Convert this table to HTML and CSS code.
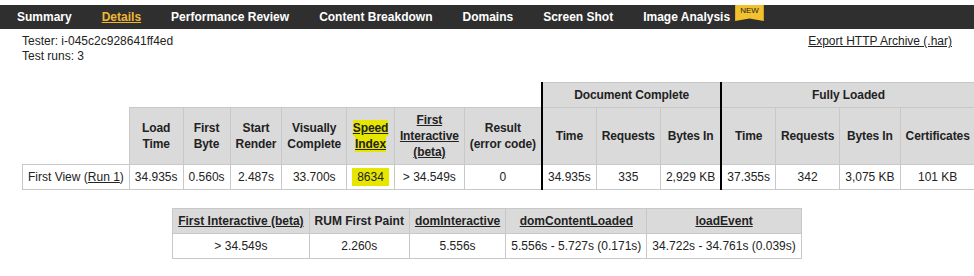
FILE: index.html
```html
<!DOCTYPE html>
<html lang="en">
<head>
<meta charset="utf-8">
<title>Test Details</title>
<link rel="stylesheet" href="styles.css">
</head>
<body>
<nav class="tabs">
  <a class="tab" href="#">Summary</a>
  <a class="tab active" href="#">Details</a>
  <a class="tab" href="#">Performance Review</a>
  <a class="tab" href="#">Content Breakdown</a>
  <a class="tab" href="#">Domains</a>
  <a class="tab" href="#">Screen Shot</a>
  <a class="tab" href="#">Image Analysis<span class="badge">NEW</span></a>
</nav>
<div class="page">
  <div class="info">
    <div class="meta">
      <div>Tester: i-045c2c928641ff4ed</div>
      <div>Test runs: 3</div>
    </div>
    <a class="export" href="#">Export HTTP Archive (.har)</a>
  </div>

  <table class="results">
    <thead>
      <tr>
        <th class="empty" colspan="8"></th>
        <th class="divider" colspan="3">Document Complete</th>
        <th class="divider" colspan="4">Fully Loaded</th>
      </tr>
      <tr>
        <th class="empty"></th>
        <th>Load<br>Time</th>
        <th>First<br>Byte</th>
        <th>Start<br>Render</th>
        <th>Visually<br>Complete</th>
        <th><a class="hl" href="#">Speed</a><br><a class="hl" href="#">Index</a></th>
        <th><a href="#">First<br>Interactive<br>(beta)</a></th>
        <th>Result<br>(error code)</th>
        <th class="divider">Time</th>
        <th>Requests</th>
        <th>Bytes In</th>
        <th class="divider">Time</th>
        <th>Requests</th>
        <th>Bytes In</th>
        <th>Certificates</th>
      </tr>
    </thead>
    <tbody>
      <tr>
        <td>First View (<a href="#">Run 1</a>)</td>
        <td>34.935s</td>
        <td>0.560s</td>
        <td>2.487s</td>
        <td>33.700s</td>
        <td><span class="hl-box">8634</span></td>
        <td>&gt; 34.549s</td>
        <td>0</td>
        <td class="divider">34.935s</td>
        <td>335</td>
        <td>2,929 KB</td>
        <td class="divider">37.355s</td>
        <td>342</td>
        <td>3,075 KB</td>
        <td>101 KB</td>
      </tr>
    </tbody>
  </table>

  <table class="rum">
    <thead>
      <tr>
        <th><a href="#">First Interactive (beta)</a></th>
        <th>RUM First Paint</th>
        <th><a href="#">domInteractive</a></th>
        <th><a href="#">domContentLoaded</a></th>
        <th><a href="#">loadEvent</a></th>
      </tr>
    </thead>
    <tbody>
      <tr>
        <td>&gt; 34.549s</td>
        <td>2.260s</td>
        <td>5.556s</td>
        <td>5.556s - 5.727s (0.171s)</td>
        <td>34.722s - 34.761s (0.039s)</td>
      </tr>
    </tbody>
  </table>
</div>
</body>
</html>
```

FILE: styles.css
```css
* {
  box-sizing: border-box;
}

body {
  margin: 0;
  background: #fff;
  color: #222;
  font-family: "Liberation Sans", Arial, sans-serif;
  font-size: 12px;
}

.tabs {
  display: flex;
  height: 24px;
  margin-top: 5px;
  padding-left: 2px;
  background: #2f2f2f;
}

.tab {
  padding: 0 15px;
  line-height: 24px;
  font-weight: bold;
  color: #fff;
  text-decoration: none;
  white-space: nowrap;
}

.tab.active {
  color: #f2b630;
  text-decoration: underline;
}

.badge {
  display: inline-block;
  vertical-align: top;
  height: 16px;
  margin-left: 5px;
  padding: 0 5px;
  background: #f2c12e;
  color: #222;
  font-size: 8px;
  font-weight: normal;
  line-height: 12px;
  clip-path: polygon(0 0, 100% 0, 100% 100%, 50% 84%, 0 100%);
}

.page {
  padding: 5px 22px 0;
}

.info {
  display: flex;
  justify-content: space-between;
  line-height: 15px;
}

.export {
  color: #222;
  text-decoration: underline;
}

table {
  border-collapse: collapse;
}

.results {
  margin-top: 18px;
}

.rum {
  margin: 18px auto 0;
}

th,
td {
  padding: 4px 5px;
  border: 1px solid #c8c8c8;
  line-height: 16px;
  text-align: center;
  vertical-align: middle;
  white-space: nowrap;
}

th {
  background: #dadada;
  font-weight: bold;
}

.results th {
  letter-spacing: -0.1px;
}

th.empty {
  background: none;
  border: none;
}

th.divider,
td.divider {
  border-left: 2px solid #000;
}

a {
  color: #222;
  text-decoration: underline;
}

.hl {
  background: #e6e600;
  padding: 1px 0;
}

.hl-box {
  background: #e6e600;
  padding: 2px 5px;
}
```
